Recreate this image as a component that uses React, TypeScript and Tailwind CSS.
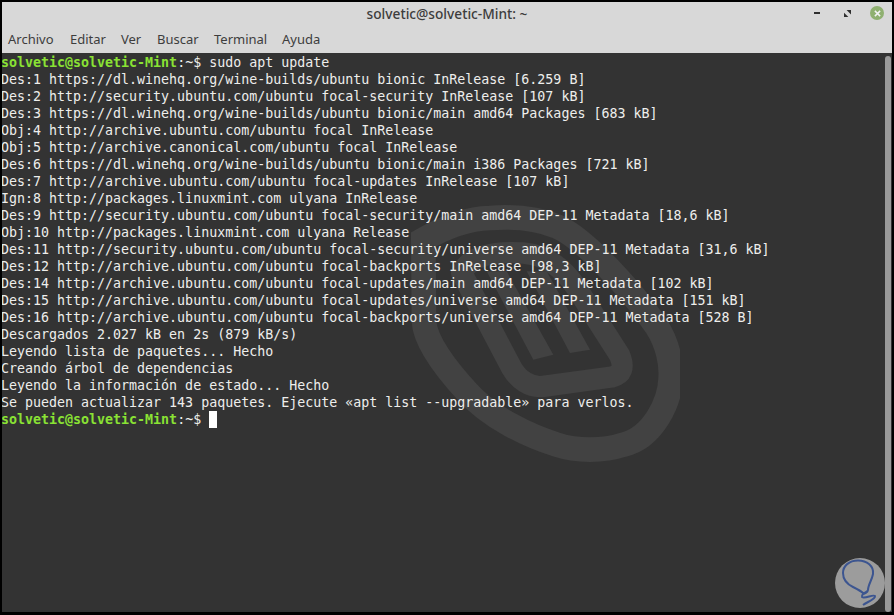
const menus = [
  { label: "Archivo", w: "w-[62px]" },
  { label: "Editar", w: "w-[51px]" },
  { label: "Ver", w: "w-[36px]" },
  { label: "Buscar", w: "w-[57px]" },
  { label: "Terminal", w: "w-[68px]" },
  { label: "Ayuda", w: "w-[50px]" },
];

const output = [
  "Des:1 https://dl.winehq.org/wine-builds/ubuntu bionic InRelease [6.259 B]",
  "Des:2 http://security.ubuntu.com/ubuntu focal-security InRelease [107 kB]",
  "Des:3 https://dl.winehq.org/wine-builds/ubuntu bionic/main amd64 Packages [683 kB]",
  "Obj:4 http://archive.ubuntu.com/ubuntu focal InRelease",
  "Obj:5 http://archive.canonical.com/ubuntu focal InRelease",
  "Des:6 https://dl.winehq.org/wine-builds/ubuntu bionic/main i386 Packages [721 kB]",
  "Des:7 http://archive.ubuntu.com/ubuntu focal-updates InRelease [107 kB]",
  "Ign:8 http://packages.linuxmint.com ulyana InRelease",
  "Des:9 http://security.ubuntu.com/ubuntu focal-security/main amd64 DEP-11 Metadata [18,6 kB]",
  "Obj:10 http://packages.linuxmint.com ulyana Release",
  "Des:11 http://security.ubuntu.com/ubuntu focal-security/universe amd64 DEP-11 Metadata [31,6 kB]",
  "Des:12 http://archive.ubuntu.com/ubuntu focal-backports InRelease [98,3 kB]",
  "Des:14 http://archive.ubuntu.com/ubuntu focal-updates/main amd64 DEP-11 Metadata [102 kB]",
  "Des:15 http://archive.ubuntu.com/ubuntu focal-updates/universe amd64 DEP-11 Metadata [151 kB]",
  "Des:16 http://archive.ubuntu.com/ubuntu focal-backports/universe amd64 DEP-11 Metadata [528 B]",
  "Descargados 2.027 kB en 2s (879 kB/s)",
  "Leyendo lista de paquetes... Hecho",
  "Creando árbol de dependencias",
  "Leyendo la información de estado... Hecho",
  "Se pueden actualizar 143 paquetes. Ejecute «apt list --upgradable» para verlos.",
];

const Prompt = () => (
  <>
    <span className="font-bold text-[#8ae234]">solvetic@solvetic-Mint</span>
    <span>:~$ </span>
  </>
);

// watermark behind the terminal text
const MintLogo = () => (
  <svg viewBox="0 0 870 840" className="absolute left-[388px] top-[145px] h-[280px] w-[290px]" fill="none" stroke="#424242">
    <path
      d="M100 125 C160 90 230 62 300 60 C370 55 440 60 500 85 C590 125 730 285 800 385 C835 440 845 500 842 540 C840 610 790 720 700 740 C640 760 560 760 500 740 C420 715 300 660 230 580 C170 515 105 430 102 370 Z"
      strokeWidth="74"
    />
    <path
      d="M215 225 C240 170 320 160 400 165 C470 170 520 210 560 270 L688 470 C705 510 695 530 665 537 L460 565 C420 570 385 545 365 510 Z"
      strokeWidth="64"
      strokeLinejoin="round"
    />
    <path d="M430 485 L490 470 L350 220 L290 220 Z M540 465 L600 455 L470 220 L410 220 Z" fill="#424242" stroke="none" />
  </svg>
);

const App = () => {
  return (
    <div className="h-[615px] w-[894px] overflow-hidden bg-black font-['DejaVu_Sans_Mono',monospace]">
      <div className="flex h-[612px] w-[892px] flex-col border-l-2 border-t-2 border-black">
        <header className="h-[51px] shrink-0 bg-[#d8d8d8]">
          <div className="relative flex h-[25px] items-center justify-center font-['Noto_Sans',sans-serif] text-[13.7px] font-medium text-[#3d3d3d]">
            solvetic@solvetic-Mint: ~
            <div className="absolute right-[8px] top-[4px] flex items-center">
              <span className="h-[2px] w-[6px] bg-[#2e2e2e]" />
              <svg viewBox="0 0 8 8" className="ml-[24px] h-[7px] w-[7px]">
                <path d="M3 0 H8 V5 Z M0 3 V8 H5 Z" fill="#2e2e2e" />
              </svg>
              <span className="ml-[19px] flex h-[14px] w-[14px] items-center justify-center rounded-full bg-[#8fb070]">
                <svg viewBox="0 0 8 8" className="h-[7px] w-[7px]" stroke="#f2f2f2" strokeWidth="1.7">
                  <path d="M1 1 L7 7 M7 1 L1 7" />
                </svg>
              </span>
            </div>
          </div>
          <nav className="flex pl-[6px] pt-[3px] font-['Noto_Sans',sans-serif] text-[13px] leading-[18px] text-[#3d3d3d]">
            {menus.map((m) => (
              <span key={m.label} className={m.w}>{m.label}</span>
            ))}
          </nav>
        </header>
        <main className="relative flex-1 overflow-hidden bg-[#333333] pt-[1px] text-[13.3px] leading-[17px] text-[#eeeeec]">
          <MintLogo />
          <pre className="relative ml-[-1px] font-['DejaVu_Sans_Mono',monospace]">
            <div><Prompt />sudo apt update</div>
            {output.map((line) => (
              <div key={line}>{line}</div>
            ))}
            <div className="flex">
              <span><Prompt /></span>
              <span className="h-[17px] w-[8px] bg-white" />
            </div>
          </pre>
          <div className="absolute bottom-0 right-[1px] top-[3px] w-[6px] rounded-full bg-[#9a9a9a]" />
          <div className="absolute bottom-[4px] right-[7px] h-[50px] w-[50px] rounded-full bg-[#9c9c9c]">
            <svg viewBox="0 0 50 50" className="h-[50px] w-[50px]" fill="none" stroke="#3c5590" strokeWidth="2">
              <path d="M23 2.5 C14 2.5 8 8 8 15 C8 22 12 26 18 29 C22 31 26 33 28 35 C30 36 32 35 33 32 C33 27 37 22 38 16 C39 8 32 2.5 23 2.5 Z" />
              <path d="M33 33 C29 35 26 37 27 39 C30 41 38 36 40 38 C41 41 32 44 28 47" />
            </svg>
          </div>
        </main>
      </div>
    </div>
  );
};

export default App;
